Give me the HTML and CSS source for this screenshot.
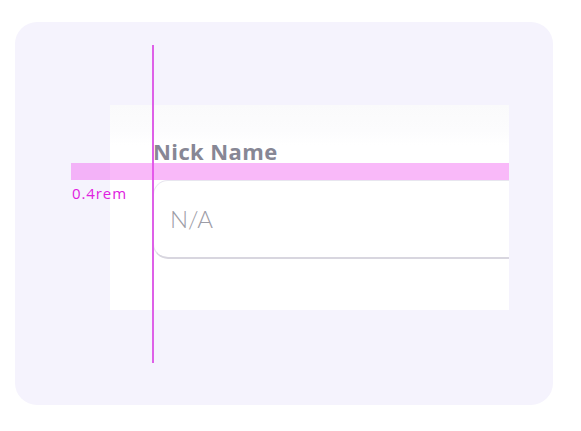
FILE: index.html
```html
<!DOCTYPE html>
<html lang="en">
<head>
<meta charset="utf-8">
<title>Nick Name spacing</title>
<link rel="stylesheet" href="styles.css">
</head>
<body>
<div class="stage">
  <div class="card">
    <div class="panel">
      <div class="label">Nick Name</div>
      <div class="field"><span class="placeholder">N/A</span></div>
    </div>
  </div>
  <div class="guide-v"></div>
  <div class="guide-band"></div>
  <div class="guide-text">0.4rem</div>
</div>
</body>
</html>
```
FILE: styles.css
```css
html, body {
  margin: 0;
  padding: 0;
  background: #ffffff;
}
body {
  font-family: Lato, "Noto Sans", sans-serif;
}
.stage {
  position: relative;
  width: 581px;
  height: 431px;
  padding: 22px 0 0 15px;
  box-sizing: border-box;
}
.card {
  width: 538px;
  height: 383px;
  border-radius: 22px;
  background: #f5f3fd;
  padding: 83px 0 0 95px;
  box-sizing: border-box;
}
.panel {
  width: 399px;
  height: 205px;
  background: linear-gradient(#fafafb 0, #fcfcfd 26px, #ffffff 40px);
  overflow: hidden;
  padding: 33px 0 0 43px;
  box-sizing: border-box;
}
.label {
  font-family: "Open Sans", Lato, sans-serif;
  font-size: 22px;
  line-height: 26px;
  font-weight: 700;
  color: #878795;
  letter-spacing: 0.4px;
}
.field {
  margin-top: 16px;
  width: 420px;
  height: 79px;
  box-sizing: border-box;
  border: 1.5px solid #e8e6ef;
  border-bottom: 2.5px solid #d8d6df;
  border-radius: 15px;
  display: flex;
  align-items: center;
  padding-left: 16px;
}
.placeholder {
  font-size: 24px;
  font-weight: 300;
  color: #9c9ca6;
  margin-top: -2px;
}
.guide-v {
  position: absolute;
  left: 152px;
  top: 45px;
  width: 2px;
  height: 318px;
  background: #de60e8;
}
.guide-band {
  position: absolute;
  left: 71px;
  top: 163px;
  width: 438px;
  height: 17px;
  background: rgba(240, 80, 240, 0.4);
}
.guide-text {
  position: absolute;
  left: 72px;
  top: 183px;
  font-family: "Open Sans", Lato, sans-serif;
  font-size: 15px;
  line-height: 20px;
  color: #e020e0;
  font-weight: 500;
  letter-spacing: 0.9px;
}
```
